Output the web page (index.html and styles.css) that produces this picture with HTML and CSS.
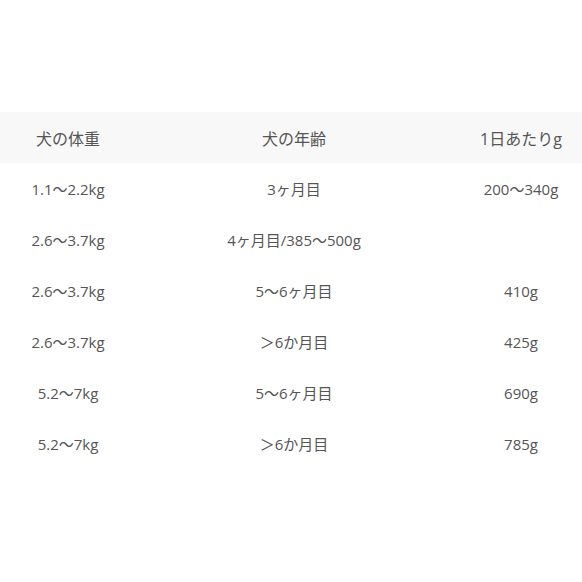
FILE: index.html
```html
<!DOCTYPE html>
<html lang="ja">
<head>
<meta charset="utf-8">
<link rel="stylesheet" href="styles.css">
</head>
<body>
<div class="table">
  <div class="row head">
    <div class="c1">犬の体重</div><div class="c2">犬の年齢</div><div class="c3">1日あたりg</div>
  </div>
  <div class="row">
    <div class="c1">1.1〜2.2kg</div><div class="c2">3ヶ月目</div><div class="c3">200〜340g</div>
  </div>
  <div class="row">
    <div class="c1">2.6〜3.7kg</div><div class="c2">4ヶ月目/385〜500g</div><div class="c3"></div>
  </div>
  <div class="row">
    <div class="c1">2.6〜3.7kg</div><div class="c2">5〜6ヶ月目</div><div class="c3">410g</div>
  </div>
  <div class="row">
    <div class="c1">2.6〜3.7kg</div><div class="c2">＞6か月目</div><div class="c3">425g</div>
  </div>
  <div class="row">
    <div class="c1">5.2〜7kg</div><div class="c2">5〜6ヶ月目</div><div class="c3">690g</div>
  </div>
  <div class="row">
    <div class="c1">5.2〜7kg</div><div class="c2">＞6か月目</div><div class="c3">785g</div>
  </div>
</div>
</body>
</html>
```
FILE: styles.css
```css
html, body {
  margin: 0;
  padding: 0;
  background: #ffffff;
}
body {
  font-family: "Open Sans", "Noto Sans CJK JP", sans-serif;
  font-size: 15px;
  color: #555555;
}
.table {
  padding-top: 112px;
  width: 582px;
}
.row {
  display: grid;
  grid-template-columns: 136px 316px 130px;
  height: 51px;
  align-items: center;
  text-align: center;
}
.row.head {
  background: #f8f8f8;
  font-size: 16px;
}
.c3 {
  padding-left: 8px;
}
```
